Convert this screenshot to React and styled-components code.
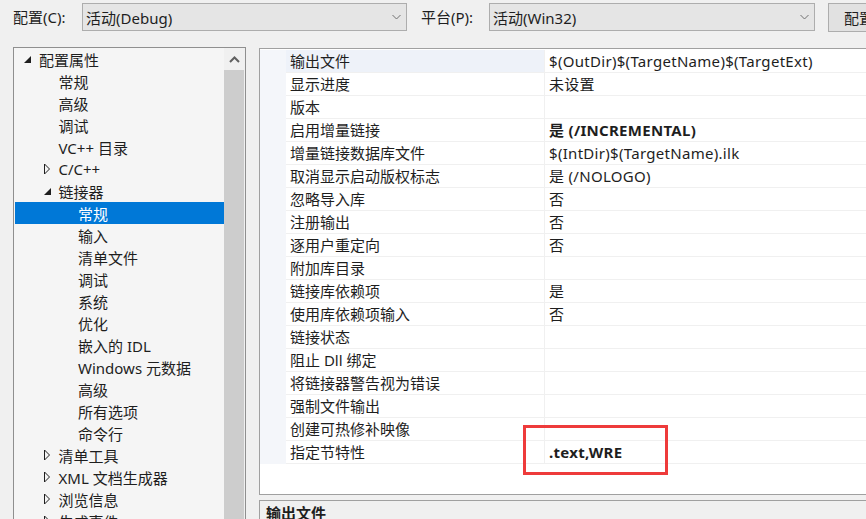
import styled, { createGlobalStyle } from "styled-components";

const GlobalStyle = createGlobalStyle`
  html, body {
    margin: 0;
    padding: 0;
    background: #f0f0f0;
  }
  body {
    font-family: "Noto Sans", "Noto Sans CJK SC", sans-serif;
    font-size: 15px;
    color: #1e1e1e;
  }
`;

const Window = styled.div`
  width: 866px;
  height: 519px;
  overflow: hidden;
  background: #f0f0f0;
`;

const Header = styled.div`
  display: flex;
  align-items: center;
  height: 28px;
  padding: 3px 0 16px 13px;
  white-space: nowrap;
`;

const FieldLabel = styled.span`
  box-sizing: border-box;
  width: ${(p) => p.$width}px;
  margin-left: ${(p) => p.$offset || 0}px;
  flex-shrink: 0;
  line-height: 27px;
`;

const Combo = styled.div`
  box-sizing: border-box;
  width: ${(p) => p.$width}px;
  height: 28px;
  display: flex;
  align-items: center;
  justify-content: space-between;
  padding: 0 5px 0 3px;
  background: #e5e5e5;
  border: 1px solid #adadad;
  flex-shrink: 0;
`;

const Button = styled.div`
  box-sizing: border-box;
  margin-left: 13px;
  width: 150px;
  height: 29px;
  padding-left: 15px;
  display: flex;
  align-items: center;
  background: #e1e1e1;
  border: 1px solid #adadad;
  flex-shrink: 0;
`;

const Body = styled.div`
  display: flex;
  gap: 13px;
  padding-left: 13px;
`;

const TreePanel = styled.div`
  box-sizing: border-box;
  width: 233px;
  height: 480px;
  flex-shrink: 0;
  display: flex;
  border: 1px solid #8f8f8f;
  background: #f5f5f5;
`;

const TreeList = styled.div`
  flex: 1;
  padding: 0 0 0 1px;
`;

const TreeRow = styled.div`
  height: 22px;
  display: flex;
  align-items: center;
  padding-left: ${(p) => 8 + p.$level * 19.5}px;
  background: ${(p) => (p.$selected ? "#0078d7" : "transparent")};
  color: ${(p) => (p.$selected ? "#ffffff" : "#1e1e1e")};
  white-space: nowrap;
`;

const Twisty = styled.span`
  width: 16px;
  height: 16px;
  flex-shrink: 0;
  display: flex;
`;

const ScrollBar = styled.div`
  width: 21px;
  display: flex;
  flex-direction: column;
  background: #f0f0f0;
`;

const ScrollButton = styled.div`
  height: 22px;
  display: flex;
  align-items: center;
  justify-content: center;
  padding-right: 1px;
`;

const ScrollThumb = styled.div`
  flex: 1;
  margin-right: 1px;
  background: #cdcdcd;
`;

const RightColumn = styled.div`
  width: 640px;
  flex-shrink: 0;
  display: flex;
  flex-direction: column;
  gap: 5px;
  padding-top: 1px;
`;

const GridPanel = styled.div`
  position: relative;
  box-sizing: border-box;
  height: 447px;
  border: 1px solid #a0a0a0;
  background: #ffffff;
  padding-top: 1px;
`;

const PropRow = styled.div`
  display: grid;
  grid-template-columns: 26px 258px 1fr;
  height: 23px;
`;

const Gutter = styled.div`
  background: #f4f6fa;
`;

const Cell = styled.div`
  box-sizing: border-box;
  padding-left: 4px;
  line-height: 22px;
  border-bottom: 1px solid #f0f0f0;
  border-left: ${(p) => (p.$value ? "1px solid #f0f0f0" : "none")};
  background: ${(p) => (p.$selected ? "#eef2f9" : "#ffffff")};
  font-weight: ${(p) => (p.$bold ? 700 : 400)};
  letter-spacing: ${(p) => (p.$value ? "0.3px" : "0")};
  white-space: nowrap;
`;

const Highlight = styled.div`
  position: absolute;
  left: 263px;
  top: 376px;
  width: 145px;
  height: 50px;
  box-sizing: border-box;
  border: 3px solid #ee3b3b;
`;

const DescPanel = styled.div`
  box-sizing: border-box;
  height: 40px;
  border: 1px solid #a0a0a0;
  padding: 1px 0 0 6px;
  font-weight: 700;
`;

const ChevronDown = () => (
  <svg width="9" height="6" viewBox="0 0 9 6">
    <path d="M0.5 1 L4.5 5 L8.5 1" fill="none" stroke="#707070" strokeWidth="1" />
  </svg>
);

const ChevronUp = () => (
  <svg width="11" height="7" viewBox="0 0 11 7">
    <path d="M1 6 L5.5 1.5 L10 6" fill="none" stroke="#606060" strokeWidth="2" />
  </svg>
);

const Arrow = ({ state }) => {
  if (!state) return <Twisty />;
  return (
    <Twisty>
      <svg width="16" height="16" viewBox="0 0 16 16">
        {state === "open" ? (
          <polygon points="1,12 8,12 8,5" fill="#1e1e1e" />
        ) : (
          <polygon points="1.5,3 1.5,13 6.5,8" fill="none" stroke="#1e1e1e" strokeWidth="1" />
        )}
      </svg>
    </Twisty>
  );
};

const tree = [
  { level: 0, text: "配置属性", arrow: "open" },
  { level: 1, text: "常规" },
  { level: 1, text: "高级" },
  { level: 1, text: "调试" },
  { level: 1, text: "VC++ 目录" },
  { level: 1, text: "C/C++", arrow: "closed" },
  { level: 1, text: "链接器", arrow: "open" },
  { level: 2, text: "常规", selected: true },
  { level: 2, text: "输入" },
  { level: 2, text: "清单文件" },
  { level: 2, text: "调试" },
  { level: 2, text: "系统" },
  { level: 2, text: "优化" },
  { level: 2, text: "嵌入的 IDL" },
  { level: 2, text: "Windows 元数据" },
  { level: 2, text: "高级" },
  { level: 2, text: "所有选项" },
  { level: 2, text: "命令行" },
  { level: 1, text: "清单工具", arrow: "closed" },
  { level: 1, text: "XML 文档生成器", arrow: "closed" },
  { level: 1, text: "浏览信息", arrow: "closed" },
  { level: 1, text: "生成事件", arrow: "closed" },
];

const props = [
  ["输出文件", "$(OutDir)$(TargetName)$(TargetExt)"],
  ["显示进度", "未设置"],
  ["版本", ""],
  ["启用增量链接", "是 (/INCREMENTAL)", true],
  ["增量链接数据库文件", "$(IntDir)$(TargetName).ilk"],
  ["取消显示启动版权标志", "是 (/NOLOGO)"],
  ["忽略导入库", "否"],
  ["注册输出", "否"],
  ["逐用户重定向", "否"],
  ["附加库目录", ""],
  ["链接库依赖项", "是"],
  ["使用库依赖项输入", "否"],
  ["链接状态", ""],
  ["阻止 Dll 绑定", ""],
  ["将链接器警告视为错误", ""],
  ["强制文件输出", ""],
  ["创建可热修补映像", ""],
  ["指定节特性", ".text,WRE", true],
];

export default function App() {
  return (
    <Window>
      <GlobalStyle />
      <Header>
        <FieldLabel $width={69}>配置(C):</FieldLabel>
        <Combo $width={325}>
          <span>活动(Debug)</span>
          <ChevronDown />
        </Combo>
        <FieldLabel $offset={14} $width={68}>平台(P):</FieldLabel>
        <Combo $width={326}>
          <span>活动(Win32)</span>
          <ChevronDown />
        </Combo>
        <Button>配置管理器(O)...</Button>
      </Header>
      <Body>
        <TreePanel>
          <TreeList>
            {tree.map((item, i) => (
              <TreeRow key={i} $level={item.level} $selected={item.selected}>
                <Arrow state={item.arrow} />
                {item.text}
              </TreeRow>
            ))}
          </TreeList>
          <ScrollBar>
            <ScrollButton>
              <ChevronUp />
            </ScrollButton>
            <ScrollThumb />
          </ScrollBar>
        </TreePanel>
        <RightColumn>
          <GridPanel>
            {props.map(([name, value, bold], i) => (
              <PropRow key={i}>
                <Gutter />
                <Cell $selected={i === 0}>{name}</Cell>
                <Cell $value $bold={bold}>{value}</Cell>
              </PropRow>
            ))}
            <Highlight />
          </GridPanel>
          <DescPanel>输出文件</DescPanel>
        </RightColumn>
      </Body>
    </Window>
  );
}
